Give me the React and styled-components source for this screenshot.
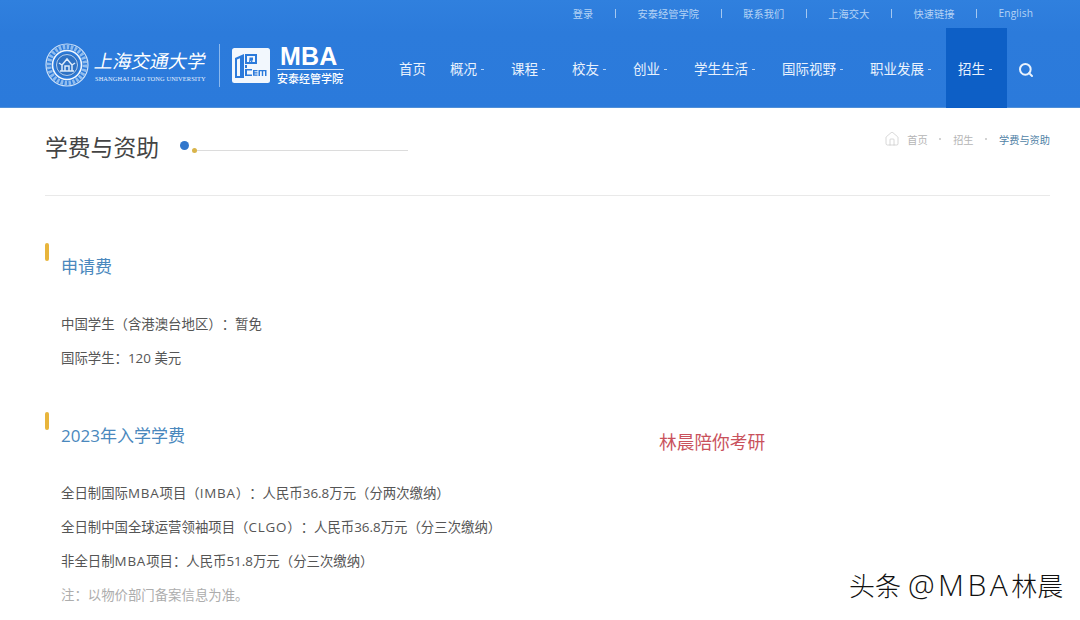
import React from 'react'
import styled, { createGlobalStyle } from 'styled-components'
import { Search, Home } from 'lucide-react'

const GlobalStyle = createGlobalStyle`
  html, body {
    margin: 0;
    padding: 0;
    background: #fff;
  }
  body {
    font-family: 'Open Sans', 'Noto Sans CJK SC', sans-serif;
    text-spacing-trim: space-all;
  }
`

const Page = styled.div`
  position: relative;
  width: 1080px;
  height: 620px;
  overflow: hidden;
  background: #fff;
`

const Header = styled.header`
  height: 108px;
  background: linear-gradient(180deg, #3080de 0%, #2c7bdb 30%, #2b7adb 100%);
  box-shadow: inset 0 -1px 0 #4f8fd8;
`

const TopBar = styled.div`
  height: 28px;
  padding: 0 47px 2px 0;
  box-sizing: border-box;
  display: flex;
  justify-content: flex-end;
  align-items: center;
  color: #b4d3f5;
  font-size: 10.2px;
  letter-spacing: 0.1px;
`

const TopSep = styled.span`
  width: 1px;
  height: 9px;
  margin: 0 21.5px;
  background: #a5c8f0;
`

const MainBar = styled.div`
  height: 80px;
  padding-left: 45px;
  display: flex;
  align-items: stretch;
`

const Logo = styled.div`
  display: flex;
  align-items: center;
  height: 74px;
  color: #fff;
`

const SchoolName = styled.div`
  margin-left: 6px;
  width: 112px;
`

const SchoolCn = styled.div`
  font-size: 18.5px;
  line-height: 25px;
  font-weight: 400;
  white-space: nowrap;
  transform: skewX(-12deg);
`

const SchoolEn = styled.div`
  margin-top: 2px;
  font-family: 'Liberation Serif', serif;
  font-size: 6.4px;
  line-height: 8px;
  letter-spacing: 0.1px;
  white-space: nowrap;
  color: #e6f0fc;
`

const LogoLine = styled.span`
  width: 1px;
  height: 43px;
  margin: 0 12px;
  background: #8ab8ee;
`

const MbaBlock = styled.div`
  margin-left: 7px;
  width: 67px;
`

const MbaText = styled.div`
  font-family: 'Liberation Sans', sans-serif;
  font-size: 25px;
  line-height: 22px;
  font-weight: 700;
  letter-spacing: 0.2px;
  padding-left: 3px;
  border-bottom: 1px solid #cfe2f8;
  padding-bottom: 2px;
`

const MbaSub = styled.div`
  margin-top: 2px;
  font-size: 11px;
  line-height: 14px;
  font-weight: 500;
  white-space: nowrap;
`

const Nav = styled.nav`
  margin-left: 43px;
  display: flex;
  align-items: stretch;
`

const NavItem = styled.a`
  padding: 0 12px;
  display: flex;
  align-items: center;
  font-size: 13.5px;
  color: #e9f2fd;
  background: ${p => (p.$active ? '#0d5fc6' : 'transparent')};
`

const Caret = styled.span`
  width: 3px;
  height: 1px;
  margin: 2px 3px 0 4px;
  background: #b5d2f4;
`

const SearchBtn = styled.span`
  margin-left: 11px;
  display: flex;
  align-items: center;
  padding-top: 4px;
  color: #e9f2fd;
`

const Content = styled.main`
  padding: 0 30px 0 45px;
`

const TitleRow = styled.div`
  height: 87px;
  display: flex;
  align-items: flex-start;
  border-bottom: 1px solid #e9e9e9;
`

const PageTitle = styled.h1`
  margin: 23px 0 0;
  font-size: 22.8px;
  line-height: 33px;
  font-weight: 400;
  color: #444;
`

const TitleDeco = styled.div`
  margin: 33px 0 0 21px;
  width: 228px;
  height: 12px;
  display: flex;
  align-items: flex-end;
`

const BlueDot = styled.span`
  width: 9px;
  height: 9px;
  border-radius: 50%;
  background: #3277cc;
  align-self: flex-start;
`

const YellowDot = styled.span`
  width: 5px;
  height: 5px;
  margin-left: 3px;
  border-radius: 50%;
  background: #d9b44a;
`

const DecoLine = styled.span`
  flex: 1;
  height: 1px;
  margin-bottom: 2px;
  background: #dcdcdc;
`

const Crumbs = styled.div`
  margin: 23px 0 0 auto;
  display: flex;
  align-items: center;
  height: 16px;
  font-size: 10.2px;
  color: #b5b5b5;
`

const CrumbDot = styled.span`
  width: 2px;
  height: 2px;
  margin: 0 11.75px;
  border-radius: 50%;
  background: #c4c4c4;
`

const CrumbCurrent = styled.span`
  color: #4f7fa6;
`

const HomeIcon = styled(Home)`
  margin-right: 7px;
  color: #c4c4c4;
`

const Section = styled.section`
  padding-top: ${p => p.$top}px;
`

const SectionHead = styled.div`
  display: flex;
  align-items: flex-start;
  height: 36px;
`

const HeadBar = styled.span`
  width: 4px;
  height: 18px;
  border-radius: 2px;
  background: #e8b53c;
`

const HeadText = styled.h2`
  margin: 10.5px 0 0 12px;
  font-size: 17px;
  line-height: 26px;
  font-weight: 400;
  color: #4a88bd;
`

const Lines = styled.div`
  margin-top: 28px;
  padding-left: 16px;
`

const Line = styled.p`
  margin: 0;
  height: 34px;
  line-height: 34px;
  font-size: 13.4px;
  color: ${p => (p.$muted ? '#adadad' : '#555')};
`

const Latin = styled.span`
  letter-spacing: 0.8px;
`

const RedMark = styled.div`
  position: absolute;
  left: 659px;
  top: 429px;
  font-size: 17.7px;
  line-height: 26px;
  color: #c9525c;
`

const Watermark = styled.div`
  position: absolute;
  left: 849px;
  top: 566px;
  font-size: 26px;
  line-height: 38px;
  font-weight: 300;
  color: #111;
  white-space: nowrap;
  text-shadow: 1px 1px 0 #fff, -1px 0 0 #fff;
`

const WatermarkLatin = styled.span`
  margin-left: 7px;
  font-size: 30px;
  letter-spacing: 3.5px;
`

const Seal = () => (
  <svg width="44" height="44" viewBox="0 0 44 44" fill="none">
    <circle cx="22" cy="22" r="21" stroke="#cfe2f8" strokeWidth="1.2" />
    <circle cx="22" cy="22" r="18" stroke="#8fbcee" strokeWidth="4.5" strokeDasharray="2.5 1.5" />
    <circle cx="22" cy="22" r="14.5" stroke="#f2f7fd" strokeWidth="1.6" />
    <circle cx="22" cy="22" r="12" fill="#2f72c4" />
    <circle cx="22" cy="22" r="10.5" stroke="#d5e5f8" strokeWidth="0.8" />
    <path d="M15 28h14M17 28v-6l5-6 5 6v6M20 28v-5h4v5M14 20l3 2M30 20l-3 2" stroke="#dceafa" strokeWidth="1.5" />
  </svg>
)

const IcemMark = () => (
  <svg width="38" height="35" viewBox="0 0 38 35">
    <rect width="38" height="35" rx="2.5" fill="#f2f7fd" />
    <path d="M3 30V10l9-4v24z" fill="#2b7adb" />
    <path d="M5 28V11.500l3-1.300V28z" fill="#f2f7fd" />
    <path d="M13 6h12v10h-12zM15 8v6h8v-6z" fill="#2b7adb" fillRule="evenodd" />
    <path d="M17.500 9.500h3.500v3h-1.500l2 2.500h-1.500l-2-2.500v2.500h-1z" fill="#2b7adb" />
    <path d="M13 17h2v3h-2z" fill="#2b7adb" />
    <path d="M13 21h7v1.500h-5v4h5v1.500h-7z" fill="#2b7adb" />
    <path d="M21 22h4.500v1.200h-3v1.100h3v1.200h-3v1.100h3v1.200h-4.500z" fill="#2b7adb" />
    <path d="M26.500 22h8v6h-1.500v-4.800h-1.800v4.800h-1.400v-4.800h-1.800v4.800h-1.500z" fill="#2b7adb" />
  </svg>
)

const topLinks = ['登录', '安泰经管学院', '联系我们', '上海交大', '快速链接', 'English']

const navItems = [
  { label: '首页' },
  { label: '概况', caret: true },
  { label: '课程', caret: true },
  { label: '校友', caret: true },
  { label: '创业', caret: true },
  { label: '学生生活', caret: true },
  { label: '国际视野', caret: true },
  { label: '职业发展', caret: true },
  { label: '招生', caret: true, active: true },
]

const App = () => {
  return (
    <Page>
      <GlobalStyle />
      <Header>
        <TopBar>
          {topLinks.map((t, i) => (
            <React.Fragment key={t}>
              {i > 0 && <TopSep />}
              <span>{t}</span>
            </React.Fragment>
          ))}
        </TopBar>
        <MainBar>
          <Logo>
            <Seal />
            <SchoolName>
              <SchoolCn>上海交通大学</SchoolCn>
              <SchoolEn>SHANGHAI JIAO TONG UNIVERSITY</SchoolEn>
            </SchoolName>
            <LogoLine />
            <IcemMark />
            <MbaBlock>
              <MbaText>MBA</MbaText>
              <MbaSub>安泰经管学院</MbaSub>
            </MbaBlock>
          </Logo>
          <Nav>
            {navItems.map(n => (
              <NavItem key={n.label} $active={n.active}>
                {n.label}
                {n.caret && <Caret />}
              </NavItem>
            ))}
            <SearchBtn>
              <Search size={16} strokeWidth={3} />
            </SearchBtn>
          </Nav>
        </MainBar>
      </Header>
      <Content>
        <TitleRow>
          <PageTitle>学费与资助</PageTitle>
          <TitleDeco>
            <BlueDot />
            <YellowDot />
            <DecoLine />
          </TitleDeco>
          <Crumbs>
            <HomeIcon size={16} strokeWidth={1} />
            <span>首页</span>
            <CrumbDot />
            <span>招生</span>
            <CrumbDot />
            <CrumbCurrent>学费与资助</CrumbCurrent>
          </Crumbs>
        </TitleRow>
        <Section $top={47}>
          <SectionHead>
            <HeadBar />
            <HeadText>申请费</HeadText>
          </SectionHead>
          <Lines>
            <Line>中国学生（含港澳台地区）：暂免</Line>
            <Line>国际学生：120 美元</Line>
          </Lines>
        </Section>
        <Section $top={37}>
          <SectionHead>
            <HeadBar />
            <HeadText>2023年入学学费</HeadText>
          </SectionHead>
          <Lines>
            <Line>全日制国际<Latin>MBA</Latin>项目（<Latin>IMBA</Latin>）：人民币36.8万元（分两次缴纳）</Line>
            <Line>全日制中国全球运营领袖项目（<Latin>CLGO</Latin>）：人民币36.8万元（分三次缴纳）</Line>
            <Line>非全日制<Latin>MBA</Latin>项目：人民币51.8万元（分三次缴纳）</Line>
            <Line $muted>注：以物价部门备案信息为准。</Line>
          </Lines>
        </Section>
      </Content>
      <RedMark>林晨陪你考研</RedMark>
      <Watermark>
        头条<WatermarkLatin>@MBA</WatermarkLatin>林晨
      </Watermark>
    </Page>
  )
}

export default App
